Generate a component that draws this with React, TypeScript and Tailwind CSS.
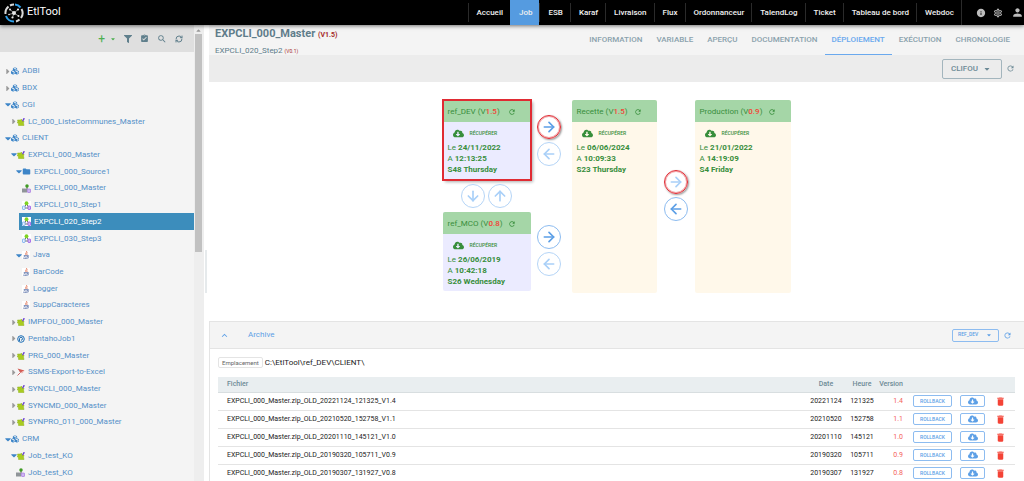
import { useState } from "react";
import type { ReactNode } from "react";
import clsx from "clsx";
import { ArrowDown, ArrowLeft, ArrowRight, ArrowUp, RefreshCw } from "lucide-react";
import {
  FaCaretDown,
  FaCaretRight,
  FaCaretUp,
  FaCloudDownloadAlt,
  FaCubes,
  FaFilter,
} from "react-icons/fa";
import {
  MdAssignmentTurnedIn,
  MdDelete,
  MdFolder,
  MdInfo,
  MdKeyboardArrowUp,
  MdOutlineSettings,
  MdPerson,
  MdRefresh,
  MdSearch,
} from "react-icons/md";

type IconName =
  | "cubes"
  | "star"
  | "folder"
  | "main"
  | "step"
  | "java"
  | "pentaho"
  | "ssms";

type TreeNode = {
  id: string;
  label: string;
  icon: IconName;
  depth: 0 | 1 | 2 | 3;
  state?: "open" | "closed";
};

const menu = [
  "Accueil",
  "Job",
  "ESB",
  "Karaf",
  "Livraison",
  "Flux",
  "Ordonnanceur",
  "TalendLog",
  "Ticket",
  "Tableau de bord",
  "Webdoc",
];

const tabs = [
  "INFORMATION",
  "VARIABLE",
  "APERÇU",
  "DOCUMENTATION",
  "DÉPLOIEMENT",
  "EXÉCUTION",
  "CHRONOLOGIE",
];

const tree: TreeNode[] = [
  { id: "adbi", label: "ADBI", icon: "cubes", depth: 0, state: "closed" },
  { id: "bdx", label: "BDX", icon: "cubes", depth: 0, state: "closed" },
  { id: "cgi", label: "CGI", icon: "cubes", depth: 0, state: "open" },
  { id: "lc", label: "LC_000_ListeCommunes_Master", icon: "star", depth: 1, state: "closed" },
  { id: "client", label: "CLIENT", icon: "cubes", depth: 0, state: "open" },
  { id: "expcli", label: "EXPCLI_000_Master", icon: "star", depth: 1, state: "open" },
  { id: "source1", label: "EXPCLI_000_Source1", icon: "folder", depth: 2, state: "open" },
  { id: "master", label: "EXPCLI_000_Master", icon: "main", depth: 3 },
  { id: "step1", label: "EXPCLI_010_Step1", icon: "step", depth: 3 },
  { id: "step2", label: "EXPCLI_020_Step2", icon: "step", depth: 3 },
  { id: "step3", label: "EXPCLI_030_Step3", icon: "step", depth: 3 },
  { id: "java", label: "Java", icon: "java", depth: 2, state: "open" },
  { id: "barcode", label: "BarCode", icon: "java", depth: 3 },
  { id: "logger", label: "Logger", icon: "java", depth: 3 },
  { id: "supp", label: "SuppCaracteres", icon: "java", depth: 3 },
  { id: "impfou", label: "IMPFOU_000_Master", icon: "star", depth: 1, state: "closed" },
  { id: "pentaho", label: "PentahoJob1", icon: "pentaho", depth: 1, state: "closed" },
  { id: "prg", label: "PRG_000_Master", icon: "star", depth: 1, state: "closed" },
  { id: "ssms", label: "SSMS-Export-to-Excel", icon: "ssms", depth: 1, state: "closed" },
  { id: "syncli", label: "SYNCLI_000_Master", icon: "star", depth: 1, state: "closed" },
  { id: "syncmd", label: "SYNCMD_000_Master", icon: "star", depth: 1, state: "closed" },
  { id: "synpro", label: "SYNPRO_011_000_Master", icon: "star", depth: 1, state: "closed" },
  { id: "crm", label: "CRM", icon: "cubes", depth: 0, state: "open" },
  { id: "jobtest", label: "Job_test_KO", icon: "star", depth: 1, state: "open" },
  { id: "jobtest-main", label: "Job_test_KO", icon: "main", depth: 1 },
];

const archives = [
  { date: "20221124", time: "121325", version: "1.4" },
  { date: "20210520", time: "152758", version: "1.1" },
  { date: "20201110", time: "145121", version: "1.0" },
  { date: "20190320", time: "105711", version: "0.9" },
  { date: "20190307", time: "131927", version: "0.8" },
];

const indent = ["pl-[6px]", "pl-[12px]", "pl-[17px]", "ml-[19px] pl-[3px]"];

function Logo() {
  return (
    <svg viewBox="0 0 40 40" className="size-5" fill="none">
      <g strokeWidth="4">
        <path d="M3 22A17 17 0 0 1 9 7" stroke="#d8d8d8" />
        <path d="M12 5A17 17 0 0 1 20 3" stroke="#d8d8d8" />
        <path d="M22 3A17 17 0 0 1 33 9" stroke="#2f9fe8" />
        <path d="M35 12A17 17 0 0 1 34 30" stroke="#d8d8d8" />
        <path d="M31 33A17 17 0 0 1 24 37" stroke="#d8d8d8" />
        <path d="M20 37A17 17 0 0 1 4 26" stroke="#2f9fe8" />
      </g>
      <path d="M20 20L12 13M20 20l8-7M20 20l9 6M20 20l-3 9M20 20l-10 3" stroke="#ccc" strokeWidth="1.4" />
      <g fill="#e6e6e6">
        <circle cx="20" cy="20" r="4" />
        <circle cx="12" cy="13" r="2" />
        <circle cx="28" cy="13" r="2.2" />
        <circle cx="29" cy="26" r="2" />
        <circle cx="17" cy="29" r="2.2" />
        <circle cx="10" cy="23" r="1.6" />
      </g>
    </svg>
  );
}

function NodeIcon({ name }: { name: IconName }) {
  if (name === "cubes") return <FaCubes className="size-2 shrink-0 text-[#3d85c8]" />;
  if (name === "folder") return <MdFolder className="size-[9px] shrink-0 text-[#3d85c8]" />;
  if (name === "star")
    return (
      <svg viewBox="0 0 16 16" className="size-2 shrink-0">
        <path d="M1 4h6l2-2 1 4h4l-1 4 1 5H3v-4L0 9l2-1z" fill="#a9cc1f" stroke="#8fb01c" />
        <path d="M10 6l3-6 3 1-4 6z" fill="#6a3fd0" />
      </svg>
    );
  if (name === "main")
    return (
      <svg viewBox="0 0 18 18" className="size-[9px] shrink-0">
        <path d="M0 9h7l3 2v6H0z" fill="#8f9498" />
        <path d="M10 5v6" stroke="#555" strokeWidth="2" />
        <circle cx="10" cy="4" r="3.5" fill="#3f9b23" />
        <rect x="11" y="10" width="6" height="7" rx="1" fill="#cdb5f2" stroke="#9055d8" />
      </svg>
    );
  if (name === "step")
    return (
      <svg viewBox="0 0 18 18" className="size-[9px] shrink-0">
        <rect width="18" height="18" fill="#fff" />
        <path d="M9 6l-4 6M9 6l4 6M5 14h8" stroke="#444" strokeWidth="1.5" />
        <circle cx="9" cy="4.5" r="3.8" fill="#7ed321" />
        <rect x="1" y="10" width="5" height="7" rx="1" fill="#e3efff" stroke="#5b9be8" strokeWidth="1.3" />
        <rect x="12" y="10" width="5" height="7" rx="1" fill="#d3b8f5" stroke="#8a3fe0" strokeWidth="1.3" />
      </svg>
    );
  if (name === "java")
    return (
      <svg viewBox="0 0 16 16" className="size-2 shrink-0" fill="none">
        <rect width="16" height="16" fill="#fff" />
        <path d="M9 0c2 3-4 4-1 8M11 3c-3 2 0 3-1 5" stroke="#e0603c" strokeWidth="1.4" />
        <path d="M4 9h7v3H5zM11 9c4-1 3 3 0 3M2 14c4 2 9 1 12-1" stroke="#6a7fb0" strokeWidth="1.6" />
      </svg>
    );
  if (name === "pentaho")
    return (
      <svg viewBox="0 0 16 16" className="size-2 shrink-0" fill="none" stroke="#1f6fb5">
        <circle cx="8" cy="8" r="6.6" strokeWidth="2" />
        <path d="M5 12V7.500a3 3 0 1 1 3 3" strokeWidth="2" />
      </svg>
    );
  return (
    <svg viewBox="0 0 16 16" className="size-2 shrink-0">
      <path d="M1 1l14 4-8 4z" fill="#d65a50" />
      <path d="M4 2l3 7-6 6" fill="none" stroke="#c66" strokeWidth="2" />
      <path d="M7 9l8-3-5 5z" fill="#e9b3ad" />
    </svg>
  );
}

function TreeRow({
  node,
  selected,
  onSelect,
}: {
  node: TreeNode;
  selected: boolean;
  onSelect: () => void;
}) {
  return (
    <li className="flex">
      <button
        onClick={onSelect}
        className={clsx(
          "flex flex-1 items-center whitespace-nowrap text-left text-[8px] leading-none",
          node.depth === 1 && !node.state ? "pl-[16px]" : indent[node.depth],
          selected ? "bg-[#3c8dbc] text-white" : "text-[#5590c8]"
        )}
      >
        {node.state === "open" && <FaCaretDown className="mr-px size-[9px] w-1 shrink-0 scale-150 text-[#3d85c8]" />}
        {node.state === "closed" && <FaCaretRight className="mr-px size-[9px] w-1 shrink-0 text-[#999]" />}
        <NodeIcon name={node.icon} />
        <span className="ml-[3px]">{node.label}</span>
      </button>
    </li>
  );
}

function Picker({
  label,
  options,
  small,
}: {
  label: string;
  options: string[];
  small?: boolean;
}) {
  return (
    <div className="grid items-center">
      <select
        aria-label={label}
        className={clsx(
          "col-start-1 row-start-1 appearance-none rounded-[2px] border font-medium",
          small
            ? "h-[13px] w-[47px] border-[#8dbcf0] pl-[5px] text-[5px] text-[#5c9fe6]"
            : "h-[20px] w-[60px] border-[#a3b5bd] pl-2 text-[8px] text-[#6d8a96]"
        )}
      >
        {options.map((o) => (
          <option key={o}>{o}</option>
        ))}
      </select>
      <FaCaretDown
        className={clsx(
          "pointer-events-none col-start-1 row-start-1 justify-self-end",
          small ? "mr-[7px] size-[6px] text-[#5c9fe6]" : "mr-[11px] size-2 text-[#6d8a96]"
        )}
      />
    </div>
  );
}

function EnvCard({
  name,
  version,
  date,
  time,
  day,
  className,
}: {
  name: string;
  version: string;
  date: string;
  time: string;
  day: string;
  className: string;
}) {
  return (
    <section className={clsx("overflow-hidden text-[8px] text-[#388e3c]", className)}>
      <header className="flex h-[22px] items-center justify-between bg-[#a5d6a7] pl-[5px] pr-[15px] pt-[2px]">
        <h2>
          {name} (V<span className="font-medium text-[#f44336]">{version}</span>)
        </h2>
        <button aria-label={`Rafraîchir ${name}`}>
          <MdRefresh className="size-2" />
        </button>
      </header>
      <div className="px-[5px] pt-[6px] leading-[11px]">
        <button className="flex h-[11px] items-center gap-[6px] pl-[5px] text-[5px] font-medium">
          <FaCloudDownloadAlt className="size-[11px]" />
          RÉCUPÉRER
        </button>
        <p className="mt-[3px]">
          Le <b>{date}</b>
        </p>
        <p>
          A <b>{time}</b>
        </p>
        <p className="font-bold">{day}</p>
      </div>
    </section>
  );
}

function MoveButton({
  label,
  children,
  strong,
  marked,
}: {
  label: string;
  children: ReactNode;
  strong?: boolean;
  marked?: boolean;
}) {
  return (
    <button
      aria-label={label}
      className={clsx(
        "flex size-6 items-center justify-center rounded-full border [&_svg]:size-4",
        strong ? "text-[#5c9fe6]" : "text-[#a9d0f8]",
        marked && "border-[#e02b33] shadow-[1px_1px_2px_#0006] ring-1 ring-inset ring-[#e02b33]/40",
        !marked && (strong ? "border-[#8dbcf0]" : "border-[#b5d5f7]")
      )}
    >
      {children}
    </button>
  );
}

function Sidebar() {
  const [selected, setSelected] = useState("step2");

  return (
    <aside className="flex w-[204px] shrink-0 bg-[#f4f4f4]">
      <div className="flex-1">
        <div className="flex h-[27px] items-center justify-end gap-2 bg-[#dfdfdf] pr-[11px] text-[#5f7f8c]">
          <button aria-label="Ajouter" className="flex items-center gap-[5px] text-[12px] leading-none text-[#4caf50]">
            +
            <FaCaretDown className="size-[6px]" />
          </button>
          <button aria-label="Filtrer">
            <FaFilter className="size-2" />
          </button>
          <button aria-label="Valider">
            <MdAssignmentTurnedIn className="size-[9px]" />
          </button>
          <button aria-label="Rechercher">
            <MdSearch className="size-[10px]" />
          </button>
          <button aria-label="Rafraîchir">
            <RefreshCw className="size-2" strokeWidth={3} />
          </button>
        </div>
        <ul className="mt-[11px] grid h-[418px] auto-rows-fr">
          {tree.map((node) => (
            <TreeRow
              key={node.id}
              node={node}
              selected={node.id === selected}
              onSelect={() => setSelected(node.id)}
            />
          ))}
        </ul>
      </div>
      <div className="flex w-[10px] flex-col bg-[#eeeeee] pl-px pt-[2px]">
        <FaCaretUp className="size-[7px] text-[#999]" />
        <div className="h-[218px] w-[7px] bg-[#c1c1c1]" />
      </div>
    </aside>
  );
}

function Deployment() {
  return (
    <div className="flex h-[239px] shrink-0 justify-center pt-[18px]">
      <div>
        <EnvCard
          name="ref_DEV"
          version="1.5"
          date="24/11/2022"
          time="12:13:25"
          day="S48 Thursday"
          className="h-[80px] w-[88px] bg-[#ebebff] shadow-[2px_2px_3px_#0005] outline-2 -outline-offset-1 outline-[#e02b33]"
        />
        <div className="flex h-[32px] items-center justify-center gap-[3px]">
          <MoveButton label="Vers ref_MCO">
            <ArrowDown strokeWidth={2.5} />
          </MoveButton>
          <MoveButton label="Vers ref_DEV">
            <ArrowUp strokeWidth={2.5} />
          </MoveButton>
        </div>
        <EnvCard
          name="ref_MCO"
          version="0.8"
          date="26/06/2019"
          time="10:42:18"
          day="S26 Wednesday"
          className="h-[79px] w-[88px] rounded-[2px] bg-[#ebebff]"
        />
      </div>
      <div className="ml-[6px] mr-[11px] flex flex-col gap-[59px] pt-[15px]">
        <div className="flex flex-col gap-[3px]">
          <MoveButton label="ref_DEV vers Recette" strong marked>
            <ArrowRight strokeWidth={2.5} />
          </MoveButton>
          <MoveButton label="Recette vers ref_DEV">
            <ArrowLeft strokeWidth={2.5} />
          </MoveButton>
        </div>
        <div className="flex flex-col gap-[3px]">
          <MoveButton label="ref_MCO vers Recette" strong>
            <ArrowRight strokeWidth={2.5} />
          </MoveButton>
          <MoveButton label="Recette vers ref_MCO">
            <ArrowLeft strokeWidth={2.5} />
          </MoveButton>
        </div>
      </div>
      <EnvCard
        name="Recette"
        version="1.5"
        date="06/06/2024"
        time="10:09:33"
        day="S23 Thursday"
        className="h-[193px] w-[85px] rounded-[2px] bg-[#fff8ea]"
      />
      <div className="mx-[7px] flex flex-col gap-[3px] pt-[70px]">
        <MoveButton label="Recette vers Production" marked>
          <ArrowRight strokeWidth={2.5} />
        </MoveButton>
        <MoveButton label="Production vers Recette" strong>
          <ArrowLeft strokeWidth={2.5} />
        </MoveButton>
      </div>
      <EnvCard
        name="Production"
        version="0.9"
        date="21/01/2022"
        time="14:19:09"
        day="S4 Friday"
        className="h-[193px] w-[96px] rounded-[2px] bg-[#fff8ea]"
      />
    </div>
  );
}

function Archive() {
  const [open, setOpen] = useState(true);

  return (
    <section className="min-h-0 flex-1 border-l border-t border-[#e4e4e4]">
      <header className="flex h-[27px] items-center border-b border-[#e4e4e4] bg-[#f4f4f4] pl-[9px] pr-3 text-[#5c9fe6]">
        <button onClick={() => setOpen(!open)} className="flex items-center gap-[18px] text-[8px]">
          <MdKeyboardArrowUp className="size-[11px]" />
          Archive
        </button>
        <div className="ml-auto flex items-center gap-1">
          <Picker label="Référence" options={["REF_DEV", "REF_MCO"]} small />
          <button aria-label="Rafraîchir les archives">
            <MdRefresh className="size-[9px]" />
          </button>
        </div>
      </header>
      {open && (
        <div className="pl-2 pr-[9px] pt-[7px]">
          <p className="flex h-[13px] items-center gap-[2px] text-[8px] text-[#222]">
            <span className="rounded-[2px] border border-[#e4e4e4] px-[3px] text-[6px] leading-[9px] text-[#666]">
              Emplacement
            </span>
            C:\EtlTool\ref_DEV\CLIENT\
          </p>
          <table className="mt-2 w-full text-[7px] leading-none text-[#222]">
            <thead>
              <tr className="h-[15px] border-b border-[#d8dee0] bg-[#e9eef0] text-[#6d8a96]">
                <th className="pl-[9px] text-left font-medium">Fichier</th>
                <th className="w-[40px] font-medium">Date</th>
                <th className="w-[32px] font-medium">Heure</th>
                <th className="w-[26px] pr-px text-right font-medium">Version</th>
                <th className="w-[48px]" />
                <th className="w-[33px]" />
                <th className="w-[30px]" />
              </tr>
            </thead>
            <tbody>
              {archives.map((a) => (
                <tr key={a.date} className="h-[18px] border-b border-[#e4e4e4]">
                  <td className="pl-[9px]">
                    EXPCLI_000_Master.zip_OLD_{a.date}_{a.time}_V{a.version}
                  </td>
                  <td className="text-center">{a.date}</td>
                  <td className="text-center">{a.time}</td>
                  <td className="pr-px text-right text-[#f4625a]">{a.version}</td>
                  <td>
                    <button className="ml-auto flex h-3 w-[39px] items-center justify-center rounded-[2px] border border-[#8dbcf0] text-[5px] font-medium text-[#5c9fe6]">
                      ROLLBACK
                    </button>
                  </td>
                  <td>
                    <button
                      aria-label="Télécharger"
                      className="ml-auto flex h-3 w-[25px] items-center justify-center rounded-[2px] border border-[#8dbcf0] text-[#5c9fe6]"
                    >
                      <FaCloudDownloadAlt className="size-[10px]" />
                    </button>
                  </td>
                  <td>
                    <button aria-label="Supprimer" className="mx-auto block text-[#f44336]">
                      <MdDelete className="size-[11px]" />
                    </button>
                  </td>
                </tr>
              ))}
            </tbody>
          </table>
        </div>
      )}
    </section>
  );
}

export default function App() {
  return (
    <div className="flex h-screen flex-col overflow-hidden bg-white font-[Roboto,sans-serif]">
      <header className="z-10 flex h-[25px] shrink-0 items-stretch bg-black pl-1 text-white shadow-[0_1px_4px_#0008]">
        <a href="#" className="flex items-center gap-[3px] text-[11px]">
          <Logo />
          EtlTool
        </a>
        <nav className="ml-auto flex items-center text-[8px] font-medium text-[#f0f0f0]">
          {menu.map((item) => (
            <a
              key={item}
              href="#"
              className={clsx(
                "flex items-center border-l pl-2 pr-[7px]",
                item === "Job" ? "h-full border-[#559be0] bg-[#559be0]" : "h-[19px] border-[#2a2a2a]"
              )}
            >
              {item}
            </a>
          ))}
        </nav>
        <div className="flex items-center border-l border-[#2a2a2a] pl-[14px] text-[#bdbdbd]">
          <button aria-label="Informations">
            <MdInfo className="size-[10px]" />
          </button>
          <button aria-label="Paramètres" className="ml-[7px]">
            <MdOutlineSettings className="size-[10px]" />
          </button>
          <button aria-label="Compte" className="ml-2">
            <MdPerson className="size-[13px]" />
          </button>
        </div>
      </header>

      <div className="flex min-h-0 flex-1">
        <Sidebar />
        <div className="flex w-[5px] shrink-0 flex-col justify-center">
          <div className="mb-[-36px] ml-px h-[43px] w-[2px] bg-[#e6eaec]" />
        </div>
        <main className="flex min-w-0 flex-1 flex-col">
          <div className="flex h-[30px] shrink-0 bg-[#f4f4f4] pl-[6px] pr-[7px]">
            <div className="text-[#607d8b]">
              <h1 className="text-[11px] font-bold leading-[17px]">
                EXPCLI_000_Master <span className="text-[7px] text-[#a52a2a]">(V1.5)</span>
              </h1>
              <p className="text-[8px] leading-[13px]">
                EXPCLI_020_Step2 <span className="text-[5px] text-[#a52a2a]">(V0.1)</span>
              </p>
            </div>
            <nav className="ml-auto flex text-[8px] font-medium">
              {tabs.map((tab) => (
                <a
                  key={tab}
                  href="#"
                  className={clsx(
                    "flex items-center border-b px-[7px]",
                    tab === "DÉPLOIEMENT"
                      ? "border-[#6aa9ee] text-[#6aa9ee]"
                      : "border-transparent text-[#8ba2ad]"
                  )}
                >
                  {tab}
                </a>
              ))}
            </nav>
          </div>
          <div className="flex h-[27px] shrink-0 items-center justify-end gap-1 bg-[#ececec] pr-[9px] text-[#6d8a96]">
            <Picker label="Client" options={["CLIFOU"]} />
            <button aria-label="Rafraîchir le client">
              <MdRefresh className="size-[9px]" />
            </button>
          </div>
          <Deployment />
          <Archive />
        </main>
      </div>
    </div>
  );
}
